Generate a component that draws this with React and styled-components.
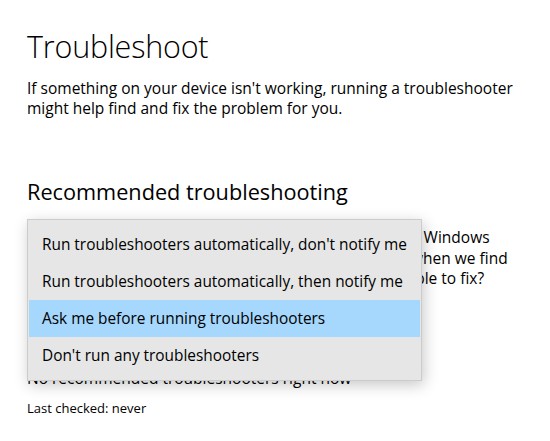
import React from 'react';
import styled, { createGlobalStyle } from 'styled-components';

const GlobalStyle = createGlobalStyle`
  html, body {
    margin: 0;
    padding: 0;
    background: #ffffff;
  }

  body {
    font-family: 'Open Sans', 'Noto Sans', 'Liberation Sans', sans-serif;
    color: #000000;
  }
`;

const Page = styled.main`
  width: 550px;
  height: 441px;
  box-sizing: border-box;
  padding: 26px 0 0 27px;
  overflow: hidden;
`;

const Title = styled.h1`
  margin: 0;
  font-size: 30.5px;
  font-weight: 300;
  line-height: 40px;
  letter-spacing: -0.2px;
`;

const Description = styled.p`
  margin: 12px 0 0;
  width: 500px;
  font-size: 15.5px;
  line-height: 20px;
`;

const SectionTitle = styled.h2`
  margin: 59px 0 0;
  font-size: 21.7px;
  font-weight: 400;
  line-height: 30px;
`;

const Section = styled.section`
  position: relative;
  margin-top: 20px;
`;

const Prompt = styled.p`
  margin: 0;
  font-size: 15.5px;
  line-height: 20.5px;
  white-space: nowrap;
`;

const Combo = styled.div`
  margin-top: 12px;
  width: 296px;
  height: 32px;
  border: 2px solid #999999;
  box-sizing: border-box;
`;

const Status = styled.p`
  margin: 35px 0 0;
  font-size: 15.5px;
  line-height: 20px;
`;

const LastChecked = styled.p`
  margin: 11px 0 0;
  font-size: 13px;
  line-height: 18px;
`;

const Menu = styled.ul`
  position: absolute;
  top: -8px;
  left: 0;
  width: 395px;
  box-sizing: border-box;
  margin: 0;
  padding: 6px 1px;
  list-style: none;
  background: #e6e6e6;
  border: 1px solid #cccccc;
  box-shadow: 2px 4px 14px rgba(0, 0, 0, 0.22);
`;

const MenuItem = styled.li`
  height: 37px;
  padding-left: 13px;
  font-size: 15.4px;
  line-height: 37px;
  white-space: nowrap;
  background: ${({ selected }) => (selected ? '#a6d7fd' : 'transparent')};
`;

const options = [
  "Run troubleshooters automatically, don't notify me",
  'Run troubleshooters automatically, then notify me',
  'Ask me before running troubleshooters',
  "Don't run any troubleshooters"
];

export default function App() {
  const selected = 2;

  return (
    <>
      <GlobalStyle />
      <Page>
        <Title>Troubleshoot</Title>
        <Description>
          If something on your device isn't working, running a troubleshooter might help find and
          fix the problem for you.
        </Description>

        <SectionTitle>Recommended troubleshooting</SectionTitle>
        <Section>
          <Prompt>
            Do you want the recommended troubleshooter run by Windows
            <br />
            automatically, and should we tell you what was done when we find
            <br />
            issues on your device that troubleshooters might be able to fix?
          </Prompt>
          <Combo />
          <Status>No recommended troubleshooters right now</Status>
          <LastChecked>Last checked: never</LastChecked>

          <Menu>
            {options.map((text, i) => (
              <MenuItem key={text} selected={i === selected}>
                {text}
              </MenuItem>
            ))}
          </Menu>
        </Section>
      </Page>
    </>
  );
}
